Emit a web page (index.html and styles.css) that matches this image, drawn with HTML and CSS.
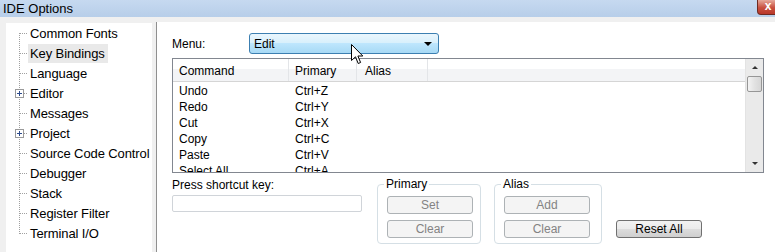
FILE: index.html
```html
<!DOCTYPE html>
<html lang="en">
<head>
  <meta charset="UTF-8" />
  <title>IDE Options</title>
  <link rel="stylesheet" href="styles.css">
</head>
<body>

  <div class="titlebar">
    <span class="title">IDE Options</span>
    <span class="close">x</span>
  </div>

  <div class="main">
    <!-- Arborescence des catégories -->
    <ul class="tree">
      <li><span class="exp"></span><span class="label">Common Fonts</span></li>
      <li><span class="exp"></span><span class="label selected">Key Bindings</span></li>
      <li><span class="exp"></span><span class="label">Language</span></li>
      <li><span class="exp plus"></span><span class="label">Editor</span></li>
      <li><span class="exp"></span><span class="label">Messages</span></li>
      <li><span class="exp plus"></span><span class="label">Project</span></li>
      <li><span class="exp"></span><span class="label">Source Code Control</span></li>
      <li><span class="exp"></span><span class="label">Debugger</span></li>
      <li><span class="exp"></span><span class="label">Stack</span></li>
      <li><span class="exp"></span><span class="label">Register Filter</span></li>
      <li class="last"><span class="exp"></span><span class="label">Terminal I/O</span></li>
    </ul>

    <div class="page">
      <div class="menu-row">
        <span class="menu-label">Menu:</span>
        <div class="combo"><span>Edit</span><span class="arrow"></span></div>
      </div>

      <div class="listbox">
        <div class="grid">
          <div class="row head">
            <span class="c1">Command</span><span class="c2">Primary</span><span class="c3">Alias</span><span class="c4"></span>
          </div>
          <div class="row"><span class="c1">Undo</span><span class="c2">Ctrl+Z</span></div>
          <div class="row"><span class="c1">Redo</span><span class="c2">Ctrl+Y</span></div>
          <div class="row"><span class="c1">Cut</span><span class="c2">Ctrl+X</span></div>
          <div class="row"><span class="c1">Copy</span><span class="c2">Ctrl+C</span></div>
          <div class="row"><span class="c1">Paste</span><span class="c2">Ctrl+V</span></div>
          <div class="row"><span class="c1">Select All</span><span class="c2">Ctrl+A</span></div>
        </div>
        <div class="scrollbar">
          <span class="sb-up"></span>
          <span class="sb-thumb"></span>
          <span class="sb-track"></span>
          <span class="sb-down"></span>
        </div>
      </div>

      <div class="bottom">
        <div class="shortcut">
          <div class="shortcut-label">Press shortcut key:</div>
          <div class="shortcut-input"></div>
        </div>
        <fieldset class="group primary">
          <legend>Primary</legend>
          <button class="btn" disabled>Set</button>
          <button class="btn" disabled>Clear</button>
        </fieldset>
        <fieldset class="group alias">
          <legend>Alias</legend>
          <button class="btn" disabled>Add</button>
          <button class="btn" disabled>Clear</button>
        </fieldset>
        <button class="btn reset">Reset All</button>
      </div>

      <!-- curseur souris -->
      <svg class="cursor" width="13" height="21" viewBox="0 0 13 21">
        <path d="M0.5 0.5 L0.5 16.5 L4.5 12.8 L7.2 19.5 L9.6 18.5 L6.9 12 L11.8 12 Z" fill="#fff" stroke="#000" stroke-width="1" stroke-linejoin="miter"/>
      </svg>
    </div>
  </div>

</body>
</html>
```

FILE: styles.css
```css
body {
  margin: 0;
  width: 775px;
  height: 252px;
  overflow: hidden;
  background: #f0f0f0;
  font-family: "Liberation Sans", Arial, sans-serif;
  color: #000;
}
.titlebar {
  display: flex;
  height: 17px;
  background: linear-gradient(#c6d9f0, #b7cee9);
}
.title {
  padding-left: 3px;
  font-size: 13px;
  line-height: 17px;
}
.close {
  margin-left: auto;
  margin-right: -4px;
  width: 20px;
  height: 14px;
  border: 1px solid #6e2a22;
  border-top: none;
  border-radius: 0 0 0 4px;
  background: linear-gradient(#e6a99b, #c8503f 55%, #b9382a);
  color: #fff;
  font-size: 12px;
  font-weight: bold;
  line-height: 13px;
  text-align: center;
}
.main {
  display: flex;
  padding-top: 5px;
}

/* arborescence */
.tree {
  list-style: none;
  margin: 1px 0 0 6px;
  padding: 0;
  width: 146px;
  height: 229px;
  background: #fff;
  font-size: 13px;
}
.tree li {
  display: flex;
  align-items: center;
  height: 20px;
  padding-left: 9px;
  background-image:
    repeating-linear-gradient(to bottom, #a0a0a0 0 1px, transparent 1px 2px),
    repeating-linear-gradient(to right, #a0a0a0 0 1px, transparent 1px 2px);
  background-size: 1px 100%, 8px 1px;
  background-position: 13px 0, 14px 10px;
  background-repeat: no-repeat;
}
.tree li:first-child {
  background-size: 1px 50%, 8px 1px;
  background-position: 13px 10px, 14px 10px;
}
.tree li.last {
  background-size: 1px 11px, 8px 1px;
}
.exp {
  width: 9px;
  height: 9px;
  margin-right: 4px;
  box-sizing: border-box;
}
.exp.plus {
  border: 1px solid #9a9a9a;
  background:
    linear-gradient(#2d4b8c, #2d4b8c) center / 5px 1px no-repeat,
    linear-gradient(#2d4b8c, #2d4b8c) center / 1px 5px no-repeat,
    #fff;
}
.label {
  padding: 0 2px;
  line-height: 19px;
  white-space: nowrap;
  letter-spacing: -0.1px;
}
.label.selected {
  background: #e9e9e9;
  padding-right: 3px;
}

/* page de droite */
.page {
  position: relative;
  flex: 1;
  margin-left: 4px;
  height: 230px;
  background: #fff;
  border-left: 1px solid #8f8f8f;
  padding-left: 15px;
  font-size: 12px;
}
.menu-row {
  display: flex;
  align-items: center;
  margin-top: 11px;
  height: 21px;
}
.menu-label {
  width: 77px;
}
.combo {
  display: flex;
  align-items: center;
  width: 190px;
  height: 21px;
  box-sizing: border-box;
  border: 1px solid #3c7fb1;
  border-radius: 3px;
  background: linear-gradient(#eaf6fd, #d9f0fc 45%, #bee6fd 50%, #a7d9f5);
  padding-left: 4px;
}
.combo .arrow {
  margin-left: auto;
  margin-right: 6px;
  border-left: 4px solid transparent;
  border-right: 4px solid transparent;
  border-top: 4px solid #000;
}
.listbox {
  display: flex;
  margin-top: 4px;
  width: 592px;
  height: 115px;
  box-sizing: border-box;
  border: 1px solid #828790;
  overflow: hidden;
}
.grid {
  flex: 1;
  overflow: hidden;
}
.row {
  display: flex;
  height: 16px;
  line-height: 16px;
  white-space: nowrap;
}
.row span {
  padding: 1px 0 0 6px;
  box-sizing: border-box;
}
.c1 { width: 116px; }
.c2 { width: 68px; }
.c3 { width: 71px; }
.c4 { flex: 1; }
.row.head .c3 { padding-left: 8px; }
.row.head {
  height: 23px;
  line-height: 23px;
  background: linear-gradient(#fff 0 45%, #f3f4f6 45%);
  border-bottom: 1px solid #d5d5d5;
  box-sizing: border-box;
}
.row.head span {
  border-right: 1px solid #e3e5e8;
}
.row.head .c4 {
  border-right: none;
}
.scrollbar {
  display: flex;
  flex-direction: column;
  width: 17px;
  background: #eaeaea;
  border-left: 1px solid #e3e3e3;
}
.sb-up,
.sb-down {
  height: 17px;
  display: flex;
  align-items: center;
  justify-content: center;
}
.sb-up::before {
  content: "";
  border-left: 3px solid transparent;
  border-right: 3px solid transparent;
  border-bottom: 3px solid #333;
}
.sb-down::before {
  content: "";
  border-left: 3px solid transparent;
  border-right: 3px solid transparent;
  border-top: 3px solid #333;
}
.sb-thumb {
  height: 16px;
  margin: 0 1px;
  border: 1px solid #969696;
  border-radius: 2px;
  box-sizing: border-box;
  background: linear-gradient(to right, #f3f3f3, #e2e2e2 50%, #d6d6d6);
}
.sb-track {
  flex: 1;
}

/* bas de page */
.bottom {
  display: flex;
  align-items: flex-start;
}
.shortcut {
  width: 190px;
}
.shortcut-label {
  margin-top: 5px;
  line-height: 14px;
}
.shortcut-input {
  margin-top: 3px;
  height: 17px;
  box-sizing: border-box;
  border: 1px solid #d0d4d9;
  border-radius: 2px;
}
.group {
  margin: 4px 0 0;
  box-sizing: border-box;
  border: 1px solid #d5dfe5;
  border-radius: 4px;
  padding: 0 0 5px 9px;
  display: flex;
  flex-direction: column;
  gap: 6px;
}
.group legend {
  margin-left: -3px;
  padding: 0 2px;
  line-height: 14px;
  font-size: 12px;
}
.group.primary {
  margin-left: 15px;
  width: 104px;
}
.group.alias {
  margin-left: 13px;
  width: 108px;
}
.group .btn:first-of-type {
  margin-top: 5px;
}
.btn {
  width: 86px;
  height: 18px;
  padding: 0;
  font-family: "Liberation Sans", Arial, sans-serif;
  font-size: 12px;
  border-radius: 3px;
}
.btn:disabled {
  border: 1px solid #adb2b5;
  background: #f4f4f4;
  color: #838383;
}
.btn.reset {
  margin: 47px 0 0 14px;
  border: 1px solid #707070;
  background: linear-gradient(#f2f2f2, #ebebeb 50%, #dddddd 50%, #cfcfcf);
  color: #000;
}
.cursor {
  position: absolute;
  left: 194px;
  top: 22px;
}
```
